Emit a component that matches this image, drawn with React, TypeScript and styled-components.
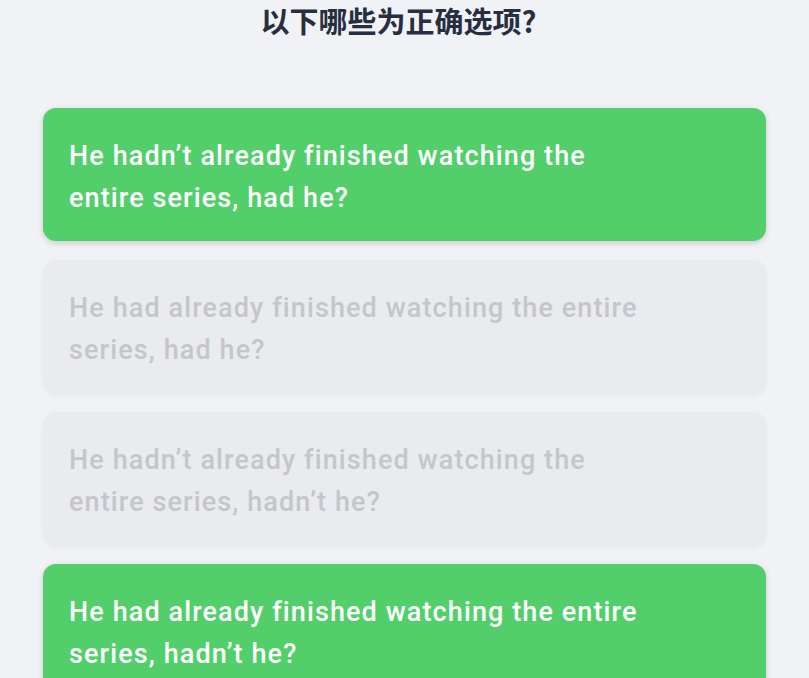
import React from "react";
import styled, { createGlobalStyle } from "styled-components";

const GlobalStyle = createGlobalStyle`
  html, body {
    margin: 0;
    padding: 0;
    background: #f1f2f5;
  }
  body {
    font-family: Roboto, "Noto Sans", "Noto Sans CJK SC", sans-serif;
  }
`;

const Page = styled.div`
  width: 809px;
  height: 678px;
  overflow: hidden;
  background: #f1f2f5;
  display: flex;
  flex-direction: column;
  align-items: stretch;
`;

const Title = styled.h1`
  flex-shrink: 0;
  margin: 0;
  height: 108px;
  padding-right: 12px;
  text-align: center;
  font-family: "Noto Sans CJK SC", "Noto Sans", sans-serif;
  font-weight: 700;
  font-size: 29px;
  line-height: 40px;
  color: #272e3f;
  box-sizing: border-box;
`;

const OptionList = styled.div`
  flex-shrink: 0;
  display: flex;
  flex-direction: column;
  gap: 19px;
  padding: 0 43px;
`;

const Option = styled.div<{ $correct: boolean }>`
  flex-shrink: 0;
  box-sizing: border-box;
  min-height: 133px;
  padding: 26px 26px 22px;
  border-radius: 13px;
  background: ${(p) => (p.$correct ? "#52cf6a" : "#eaebee")};
  box-shadow: ${(p) =>
    p.$correct
      ? "0 2px 6px rgba(0, 0, 0, 0.16)"
      : "0 2px 5px rgba(0, 0, 0, 0.05)"};
  color: ${(p) => (p.$correct ? "#ffffff" : "#c4c6cc")};
  display: flex;
  align-items: center;
`;

const OptionText = styled.p`
  margin: 0;
  max-width: 582px;
  font-family: Roboto, "Noto Sans", sans-serif;
  font-weight: 500;
  font-size: 27px;
  letter-spacing: 1.1px;
  line-height: 42px;
  font-variant-ligatures: none;
`;

const options = [
  { text: "He hadn’t already finished watching the entire series, had he?", correct: true },
  { text: "He had already finished watching the entire series, had he?", correct: false },
  { text: "He hadn’t already finished watching the entire series, hadn’t he?", correct: false },
  { text: "He had already finished watching the entire series, hadn’t he?", correct: true },
];

export default function App() {
  return (
    <Page>
      <GlobalStyle />
      <Title>以下哪些为正确选项?</Title>
      <OptionList>
        {options.map((o, i) => (
          <Option key={i} $correct={o.correct}>
            <OptionText>{o.text}</OptionText>
          </Option>
        ))}
      </OptionList>
    </Page>
  );
}
